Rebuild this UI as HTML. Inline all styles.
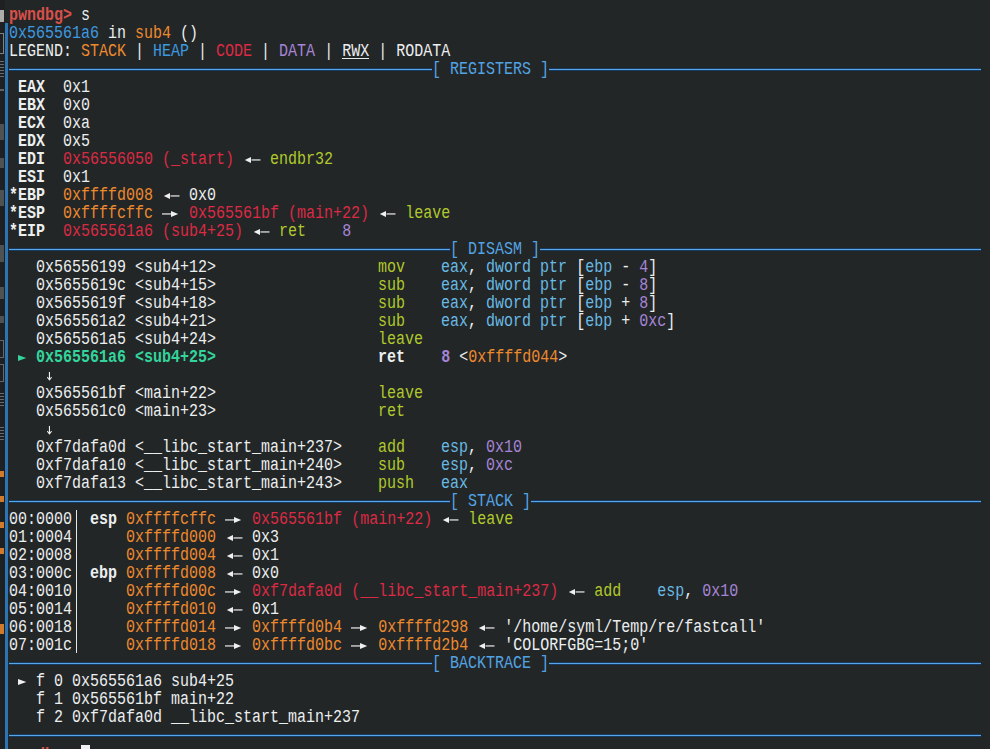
<!DOCTYPE html>
<html><head><meta charset="utf-8">
<style>
html,body{margin:0;padding:0;}
body{width:990px;height:749px;overflow:hidden;background:#232627;position:relative;}
.row{position:absolute;left:9px;height:18px;line-height:18px;transform:translateY(3.2px) scaleY(1.18);transform-origin:0 12px;white-space:pre;font-family:"Liberation Mono",monospace;font-size:15px;color:#eceff0;}
.row span{display:inline-block;vertical-align:top;height:18px;}
.ar{width:18px;}
.ar1{width:9px;}
.ar svg,.ar1 svg{display:block;}
.w{color:#eceff0}
.r{color:#dc2a44}
.pr{color:#d8504a}
.o{color:#ee8a2e}
.b{color:#3d9ae0}
.p{color:#a585d6}
.g{color:#b0c92c}
.t{color:#33d49b}
.c{color:#68bae4}
.st{color:#52a3e3}
.B{font-weight:bold}
.U{text-decoration:underline}
.ln{position:absolute;height:1px;background:#5aa6e6;box-shadow:0 -1px 0 #173a60,0 1px 0 #173a60;}
.cursor{width:9px;background:#f0f0f0;}
.strip{position:absolute;left:0;top:0;width:5px;height:749px;background:#1e2021;}
.vbar{position:absolute;left:5px;top:23px;width:3px;height:726px;background:#2c74b4;}
.ic{position:absolute;left:0;width:4px;background:#9a9a9a;opacity:.55}
.io{position:absolute;left:0;width:4px;height:6px;background:#d27a2c}
</style></head><body>
<div class="strip"></div>
<div class="ic" style="top:10px;height:12px;background:#d0d0d0;opacity:.8"></div>
<div class="ic" style="top:33px;height:19px;background:none;border:1px solid #aaa;border-left:none;width:3px;opacity:.7"></div>
<div class="ic" style="top:61px;height:18px;background:repeating-linear-gradient(#aaa 0 1px,transparent 1px 3px)"></div>
<div class="ic" style="top:89px;height:2px"></div>
<div class="ic" style="top:124px;height:16px;opacity:.4"></div>
<div class="ic" style="top:158px;height:10px;opacity:.4"></div>
<div class="ic" style="top:190px;height:16px;opacity:.4"></div>
<div class="ic" style="top:245px;height:17px;opacity:.4"></div>
<div class="ic" style="top:287px;height:12px;opacity:.4"></div>
<div class="ic" style="top:316px;height:7px;opacity:.4"></div>
<div class="ic" style="top:340px;height:16px;background:none;border:1px solid #999;border-left:none;width:3px;opacity:.6"></div>
<div class="ic" style="top:364px;height:16px;background:none;border:1px solid #999;border-left:none;width:3px;opacity:.6"></div>
<div class="ic" style="top:393px;height:15px;background:repeating-linear-gradient(#aaa 0 1px,transparent 1px 3px)"></div>
<div class="ic" style="top:427px;height:14px;background:repeating-linear-gradient(#aaa 0 1px,transparent 1px 3px)"></div>
<div class="io" style="top:471px"></div>
<div class="io" style="top:496px"></div>
<div class="io" style="top:522px"></div>
<div class="io" style="top:548px"></div>
<div class="io" style="top:624px;height:10px"></div>
<div class="vbar"></div>
<div class="row" style="top:5px"><span class="pr B">pwndbg&gt;</span><span class="w"> s</span></div>
<div class="row" style="top:23px"><span class="b">0x565561a6</span><span class="w"> in </span><span class="o">sub4</span><span class="w"> ()</span></div>
<div class="row" style="top:41px"><span class="w">LEGEND: </span><span class="o">STACK</span><span class="w"> | </span><span class="b">HEAP</span><span class="w"> | </span><span class="r">CODE</span><span class="w"> | </span><span class="p">DATA</span><span class="w"> | </span><span class="w">RWX</span><span class="w"> | </span><span class="w">RODATA</span></div>
<div class="row" style="top:77px"><span class="w B"> EAX</span><span class="w">  0x1</span></div>
<div class="row" style="top:95px"><span class="w B"> EBX</span><span class="w">  0x0</span></div>
<div class="row" style="top:113px"><span class="w B"> ECX</span><span class="w">  0xa</span></div>
<div class="row" style="top:131px"><span class="w B"> EDX</span><span class="w">  0x5</span></div>
<div class="row" style="top:149px"><span class="w B"> EDI</span><span class="w">  </span><span class="r">0x56556050 (_start)</span><span class="w"> </span><span class="ar"><svg width="18" height="18" viewBox="0 0 18 18"><path d="M1.8 8.4 L8 5.8 L8 11 Z" fill="#f0f0f0"/><rect x="8.5" y="7.9" width="9" height="1.0" fill="#f0f0f0"/></svg></span><span class="w"> </span><span class="g">endbr32</span></div>
<div class="row" style="top:167px"><span class="w B"> ESI</span><span class="w">  0x1</span></div>
<div class="row" style="top:185px"><span class="w B">*EBP</span><span class="w">  </span><span class="o">0xffffd008</span><span class="w"> </span><span class="ar"><svg width="18" height="18" viewBox="0 0 18 18"><path d="M1.8 8.4 L8 5.8 L8 11 Z" fill="#f0f0f0"/><rect x="8.5" y="7.9" width="9" height="1.0" fill="#f0f0f0"/></svg></span><span class="w"> 0x0</span></div>
<div class="row" style="top:203px"><span class="w B">*ESP</span><span class="w">  </span><span class="o">0xffffcffc</span><span class="w"> </span><span class="ar"><svg width="18" height="18" viewBox="0 0 18 18"><rect x="0" y="7.9" width="9.5" height="1.0" fill="#f0f0f0"/><path d="M16.2 8.4 L9 5.8 L9 11 Z" fill="#f0f0f0"/></svg></span><span class="w"> </span><span class="r">0x565561bf (main+22)</span><span class="w"> </span><span class="ar"><svg width="18" height="18" viewBox="0 0 18 18"><path d="M1.8 8.4 L8 5.8 L8 11 Z" fill="#f0f0f0"/><rect x="8.5" y="7.9" width="9" height="1.0" fill="#f0f0f0"/></svg></span><span class="w"> </span><span class="g">leave</span></div>
<div class="row" style="top:221px"><span class="w B">*EIP</span><span class="w">  </span><span class="r">0x565561a6 (sub4+25)</span><span class="w"> </span><span class="ar"><svg width="18" height="18" viewBox="0 0 18 18"><path d="M1.8 8.4 L8 5.8 L8 11 Z" fill="#f0f0f0"/><rect x="8.5" y="7.9" width="9" height="1.0" fill="#f0f0f0"/></svg></span><span class="w"> </span><span class="g">ret</span><span class="w">    </span><span class="p">8</span></div>
<div class="row" style="top:257px"><span class="w">   0x56556199 &lt;sub4+12&gt;                  </span><span class="g">mov    </span><span class="c">eax</span><span class="w">, </span><span class="c">dword ptr </span><span class="w">[</span><span class="c">ebp</span><span class="w"> - </span><span class="p">4</span><span class="w">]</span></div>
<div class="row" style="top:275px"><span class="w">   0x5655619c &lt;sub4+15&gt;                  </span><span class="g">sub    </span><span class="c">eax</span><span class="w">, </span><span class="c">dword ptr </span><span class="w">[</span><span class="c">ebp</span><span class="w"> - </span><span class="p">8</span><span class="w">]</span></div>
<div class="row" style="top:293px"><span class="w">   0x5655619f &lt;sub4+18&gt;                  </span><span class="g">sub    </span><span class="c">eax</span><span class="w">, </span><span class="c">dword ptr </span><span class="w">[</span><span class="c">ebp</span><span class="w"> + </span><span class="p">8</span><span class="w">]</span></div>
<div class="row" style="top:311px"><span class="w">   0x565561a2 &lt;sub4+21&gt;                  </span><span class="g">sub    </span><span class="c">eax</span><span class="w">, </span><span class="c">dword ptr </span><span class="w">[</span><span class="c">ebp</span><span class="w"> + </span><span class="p">0xc</span><span class="w">]</span></div>
<div class="row" style="top:329px"><span class="w">   0x565561a5 &lt;sub4+24&gt;                  </span><span class="g">leave  </span></div>
<div class="row" style="top:347px"><span class="w"> </span><span class="ar1"><svg width="9" height="18" viewBox="0 0 9 18"><path d="M0 5.8 L8.3 8.4 L0 11 Z" fill="#33d49b"/></svg></span><span class="w"> </span><span class="t B">0x565561a6 &lt;sub4+25&gt;</span><span class="w">                  </span><span class="w B">ret</span><span class="w">    </span><span class="p B">8</span><span class="w"> &lt;</span><span class="o">0xffffd044</span><span class="w">&gt;</span></div>
<div class="row" style="top:365px"><span class="w">    </span><span class="ar1"><svg width="9" height="18" viewBox="0 0 9 18"><rect x="3.9" y="5" width="1.1" height="6.5" fill="#f0f0f0"/><path d="M2.3 9.3 L4.45 11.8 L6.6 9.3" stroke="#f0f0f0" stroke-width="1.0" fill="none"/></svg></span></div>
<div class="row" style="top:383px"><span class="w">   0x565561bf &lt;main+22&gt;                  </span><span class="g">leave  </span></div>
<div class="row" style="top:401px"><span class="w">   0x565561c0 &lt;main+23&gt;                  </span><span class="g">ret    </span></div>
<div class="row" style="top:419px"><span class="w">    </span><span class="ar1"><svg width="9" height="18" viewBox="0 0 9 18"><rect x="3.9" y="5" width="1.1" height="6.5" fill="#f0f0f0"/><path d="M2.3 9.3 L4.45 11.8 L6.6 9.3" stroke="#f0f0f0" stroke-width="1.0" fill="none"/></svg></span></div>
<div class="row" style="top:437px"><span class="w">   0xf7dafa0d &lt;__libc_start_main+237&gt;    </span><span class="g">add    </span><span class="c">esp</span><span class="w">, </span><span class="p">0x10</span></div>
<div class="row" style="top:455px"><span class="w">   0xf7dafa10 &lt;__libc_start_main+240&gt;    </span><span class="g">sub    </span><span class="c">esp</span><span class="w">, </span><span class="p">0xc</span></div>
<div class="row" style="top:473px"><span class="w">   0xf7dafa13 &lt;__libc_start_main+243&gt;    </span><span class="g">push   </span><span class="c">eax</span></div>
<div class="row" style="top:509px"><span class="w">00:0000</span><span class="ar1"></span><span class="w"> </span><span class="w B">esp</span><span class="w"> </span><span class="o">0xffffcffc</span><span class="w"> </span><span class="ar"><svg width="18" height="18" viewBox="0 0 18 18"><rect x="0" y="7.9" width="9.5" height="1.0" fill="#f0f0f0"/><path d="M16.2 8.4 L9 5.8 L9 11 Z" fill="#f0f0f0"/></svg></span><span class="w"> </span><span class="r">0x565561bf (main+22)</span><span class="w"> </span><span class="ar"><svg width="18" height="18" viewBox="0 0 18 18"><path d="M1.8 8.4 L8 5.8 L8 11 Z" fill="#f0f0f0"/><rect x="8.5" y="7.9" width="9" height="1.0" fill="#f0f0f0"/></svg></span><span class="w"> </span><span class="g">leave</span></div>
<div class="row" style="top:527px"><span class="w">01:0004</span><span class="ar1"></span><span class="w"> </span><span class="w B">   </span><span class="w"> </span><span class="o">0xffffd000</span><span class="w"> </span><span class="ar"><svg width="18" height="18" viewBox="0 0 18 18"><path d="M1.8 8.4 L8 5.8 L8 11 Z" fill="#f0f0f0"/><rect x="8.5" y="7.9" width="9" height="1.0" fill="#f0f0f0"/></svg></span><span class="w"> 0x3</span></div>
<div class="row" style="top:545px"><span class="w">02:0008</span><span class="ar1"></span><span class="w"> </span><span class="w B">   </span><span class="w"> </span><span class="o">0xffffd004</span><span class="w"> </span><span class="ar"><svg width="18" height="18" viewBox="0 0 18 18"><path d="M1.8 8.4 L8 5.8 L8 11 Z" fill="#f0f0f0"/><rect x="8.5" y="7.9" width="9" height="1.0" fill="#f0f0f0"/></svg></span><span class="w"> 0x1</span></div>
<div class="row" style="top:563px"><span class="w">03:000c</span><span class="ar1"></span><span class="w"> </span><span class="w B">ebp</span><span class="w"> </span><span class="o">0xffffd008</span><span class="w"> </span><span class="ar"><svg width="18" height="18" viewBox="0 0 18 18"><path d="M1.8 8.4 L8 5.8 L8 11 Z" fill="#f0f0f0"/><rect x="8.5" y="7.9" width="9" height="1.0" fill="#f0f0f0"/></svg></span><span class="w"> 0x0</span></div>
<div class="row" style="top:581px"><span class="w">04:0010</span><span class="ar1"></span><span class="w"> </span><span class="w B">   </span><span class="w"> </span><span class="o">0xffffd00c</span><span class="w"> </span><span class="ar"><svg width="18" height="18" viewBox="0 0 18 18"><rect x="0" y="7.9" width="9.5" height="1.0" fill="#f0f0f0"/><path d="M16.2 8.4 L9 5.8 L9 11 Z" fill="#f0f0f0"/></svg></span><span class="w"> </span><span class="r">0xf7dafa0d (__libc_start_main+237)</span><span class="w"> </span><span class="ar"><svg width="18" height="18" viewBox="0 0 18 18"><path d="M1.8 8.4 L8 5.8 L8 11 Z" fill="#f0f0f0"/><rect x="8.5" y="7.9" width="9" height="1.0" fill="#f0f0f0"/></svg></span><span class="w"> </span><span class="g">add</span><span class="w">    </span><span class="c">esp</span><span class="w">, </span><span class="p">0x10</span></div>
<div class="row" style="top:599px"><span class="w">05:0014</span><span class="ar1"></span><span class="w"> </span><span class="w B">   </span><span class="w"> </span><span class="o">0xffffd010</span><span class="w"> </span><span class="ar"><svg width="18" height="18" viewBox="0 0 18 18"><path d="M1.8 8.4 L8 5.8 L8 11 Z" fill="#f0f0f0"/><rect x="8.5" y="7.9" width="9" height="1.0" fill="#f0f0f0"/></svg></span><span class="w"> 0x1</span></div>
<div class="row" style="top:617px"><span class="w">06:0018</span><span class="ar1"></span><span class="w"> </span><span class="w B">   </span><span class="w"> </span><span class="o">0xffffd014</span><span class="w"> </span><span class="ar"><svg width="18" height="18" viewBox="0 0 18 18"><rect x="0" y="7.9" width="9.5" height="1.0" fill="#f0f0f0"/><path d="M16.2 8.4 L9 5.8 L9 11 Z" fill="#f0f0f0"/></svg></span><span class="w"> </span><span class="o">0xffffd0b4</span><span class="w"> </span><span class="ar"><svg width="18" height="18" viewBox="0 0 18 18"><rect x="0" y="7.9" width="9.5" height="1.0" fill="#f0f0f0"/><path d="M16.2 8.4 L9 5.8 L9 11 Z" fill="#f0f0f0"/></svg></span><span class="w"> </span><span class="o">0xffffd298</span><span class="w"> </span><span class="ar"><svg width="18" height="18" viewBox="0 0 18 18"><path d="M1.8 8.4 L8 5.8 L8 11 Z" fill="#f0f0f0"/><rect x="8.5" y="7.9" width="9" height="1.0" fill="#f0f0f0"/></svg></span><span class="w"> '/home/syml/Temp/re/fastcall'</span></div>
<div class="row" style="top:635px"><span class="w">07:001c</span><span class="ar1"></span><span class="w"> </span><span class="w B">   </span><span class="w"> </span><span class="o">0xffffd018</span><span class="w"> </span><span class="ar"><svg width="18" height="18" viewBox="0 0 18 18"><rect x="0" y="7.9" width="9.5" height="1.0" fill="#f0f0f0"/><path d="M16.2 8.4 L9 5.8 L9 11 Z" fill="#f0f0f0"/></svg></span><span class="w"> </span><span class="o">0xffffd0bc</span><span class="w"> </span><span class="ar"><svg width="18" height="18" viewBox="0 0 18 18"><rect x="0" y="7.9" width="9.5" height="1.0" fill="#f0f0f0"/><path d="M16.2 8.4 L9 5.8 L9 11 Z" fill="#f0f0f0"/></svg></span><span class="w"> </span><span class="o">0xffffd2b4</span><span class="w"> </span><span class="ar"><svg width="18" height="18" viewBox="0 0 18 18"><path d="M1.8 8.4 L8 5.8 L8 11 Z" fill="#f0f0f0"/><rect x="8.5" y="7.9" width="9" height="1.0" fill="#f0f0f0"/></svg></span><span class="w"> 'COLORFGBG=15;0'</span></div>
<div class="row" style="top:671px"><span class="w"> </span><span class="ar1"><svg width="9" height="18" viewBox="0 0 9 18"><path d="M0 5.8 L8.3 8.4 L0 11 Z" fill="#f0f0f0"/></svg></span><span class="w"> f 0 0x565561a6 sub4+25</span></div>
<div class="row" style="top:689px"><span class="w">   f 1 0x565561bf main+22</span></div>
<div class="row" style="top:707px"><span class="w">   f 2 0xf7dafa0d __libc_start_main+237</span></div>
<div class="row" style="top:743px;margin-top:2px"><span class="pr B">pwndbg&gt;</span></div>
<div class="ln" style="top:69px;left:9px;width:423px"></div>
<div class="ln" style="top:69px;left:549px;width:432px"></div>
<div class="row" style="top:59px;left:432px"><span class="st">[ REGISTERS ]</span></div>
<div class="ln" style="top:249px;left:9px;width:441px"></div>
<div class="ln" style="top:249px;left:540px;width:441px"></div>
<div class="row" style="top:239px;left:450px"><span class="st">[ DISASM ]</span></div>
<div class="ln" style="top:501px;left:9px;width:441px"></div>
<div class="ln" style="top:501px;left:531px;width:450px"></div>
<div class="row" style="top:491px;left:450px"><span class="st">[ STACK ]</span></div>
<div class="ln" style="top:663px;left:9px;width:423px"></div>
<div class="ln" style="top:663px;left:549px;width:432px"></div>
<div class="row" style="top:653px;left:432px"><span class="st">[ BACKTRACE ]</span></div>
<div class="ln" style="top:735px;left:9px;width:972px"></div>
<div style="position:absolute;left:76px;top:510px;width:1px;height:143px;background:#e6e8e8"></div>
<div style="position:absolute;left:81px;top:745px;width:9px;height:10px;background:#f0f0f0"></div>
<div style="position:absolute;left:342px;top:58px;width:27px;height:1px;background:#e6e8e8"></div>
</body></html>
